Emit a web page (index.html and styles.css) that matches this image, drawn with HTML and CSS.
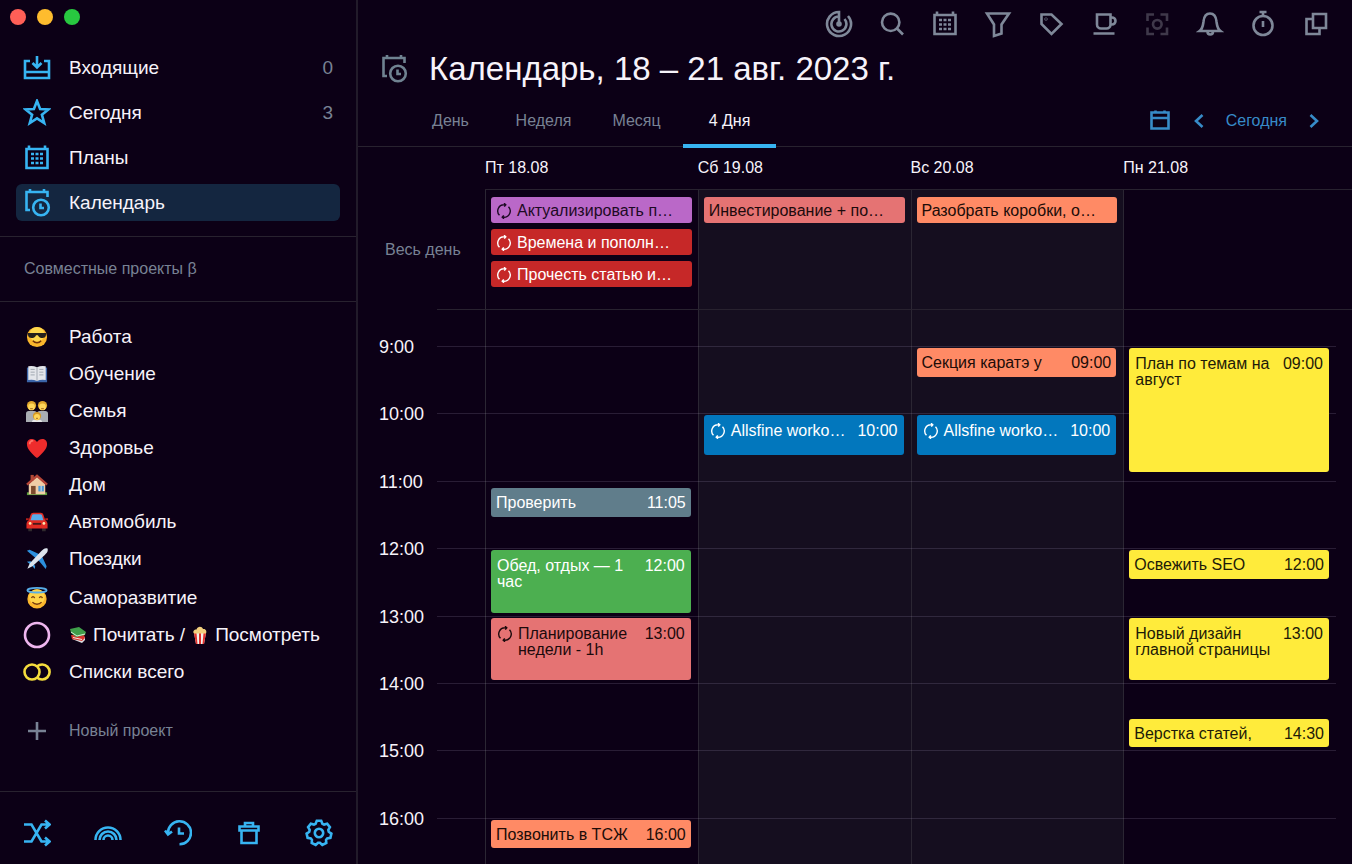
FILE: index.html
```html
<!DOCTYPE html>
<html lang="ru">
<head>
<meta charset="utf-8">
<title>Календарь</title>
<link rel="stylesheet" href="styles.css">
</head>
<body>
<svg class="sprite" aria-hidden="true">
  <symbol id="i-inbox" viewBox="0 0 28 28"><path d="M7 7H2v17h24V7h-5M2 18h24M14 2v11M9.500 9l4.500 4.500L18.500 9"/></symbol>
  <symbol id="i-star" viewBox="0 0 28 28"><path d="M14 2l3.100 8 8.400.4-6.600 5.300 2.300 8.300-7.200-4.700L6.800 24l2.300-8.300L2.500 10.400l8.400-.4z"/></symbol>
  <symbol id="i-plans" viewBox="0 0 28 28"><path d="M3.500 5h21v19h-21zM6 1.500V5M22 1.500V5"/><path class="dots" d="M8 10h3M12.500 10h3M17 10h3M8 14.500h3M12.500 14.500h3M17 14.500h3M8 19h3M12.500 19h3M17 19h3"/></symbol>
  <symbol id="i-cal" viewBox="0 0 28 28"><path d="M7 21H3.500V3h21v5M7 0v3M21 0v3"/><circle cx="18" cy="18.500" r="7.800"/><path d="M17.500 14.500V19H21"/></symbol>
  <symbol id="i-plus" viewBox="0 0 28 28"><path d="M14 5v18M5 14h18"/></symbol>
  <symbol id="i-shuffle" viewBox="0 0 28 28"><path d="M1 5.500h7.500l10 17H26M1 22.500h7.500l10-17H26M22 1.500l4.500 4-4.500 4M22 18.500l4.500 4-4.500 4"/></symbol>
  <symbol id="i-rainbow" viewBox="0 0 28 28"><path d="M1.500 21a12.500 12.500 0 0 1 25 0M5.500 21a8.500 8.500 0 0 1 17 0M9.500 21a4.500 4.500 0 0 1 9 0"/></symbol>
  <symbol id="i-history" viewBox="0 0 28 28"><path d="M4 14.500A11.500 11.500 0 1 1 15.500 25.300M1 11.500l3 4 4-3M15 8.500v6h5"/></symbol>
  <symbol id="i-trash" viewBox="0 0 28 28"><path d="M4.500 7.500h19v4h-19zM6.500 11.500h15V24h-15zM10 7.500V4h8v3.500"/></symbol>
  <symbol id="i-gear" viewBox="-14 -14 28 28"><path d="M-3.400-9.200L-2.200-12.200H2.200L3.400-9.200 5.070-8.390 8.170-9.330 10.910-5.890 9.310-3.080 9.730-1.270 12.380.57 11.400 4.860 8.210 5.360 7.060 6.810 7.280 10.040 3.310 11.950.93 9.760H-.93L-3.310 11.950-7.280 10.040-7.060 6.810-8.210 5.360-11.400 4.860-12.380.57-9.730-1.270-9.310-3.080-10.910-5.890-8.170-9.330-5.070-8.390z"/><circle r="4.200"/></symbol>
  <symbol id="i-radar" viewBox="0 0 28 28"><path d="M14 14V2a12 12 0 1 0 9 4M14 6.500A7.500 7.500 0 1 0 19.500 9"/><circle class="solid" cx="14" cy="14" r="1.500"/></symbol>
  <symbol id="i-search" viewBox="0 0 28 28"><circle cx="12.700" cy="12.300" r="8.700"/><path d="M19 18.500l6 6"/></symbol>
  <symbol id="i-funnel" viewBox="0 0 28 28"><path d="M3 3.500h22l-7.500 11v9l-7.500 2.500V14.500z"/></symbol>
  <symbol id="i-tag" viewBox="0 0 28 28"><path d="M4.500 4.500h10L24.500 14l-10 10-10-10z"/><circle class="solid" cx="9" cy="9" r=".3"/></symbol>
  <symbol id="i-cup" viewBox="0 0 28 28"><path d="M7 4.500h13.500v10a4 4 0 0 1-4 4H11a4 4 0 0 1-4-4zM20.500 7.500H22a3 3 0 0 1 0 7h-1.500M3.500 23.500h21"/></symbol>
  <symbol id="i-scan" viewBox="0 0 28 28"><path d="M4.500 11V4.500H11M17.500 4.500H24V11M24 17.500V24h-6.500M11 24H4.500v-6.500"/><circle cx="14.300" cy="14.300" r="4.300"/></symbol>
  <symbol id="i-bell" viewBox="0 0 28 28"><path d="M3.500 21c3.500-2.500 3.500-6 4-9.500C8 6.500 10 3.500 14 3.500s6 3 6.500 8c.5 3.500.5 7 4 9.500zM11.500 21.500c0 4 5.500 4 5.500 0"/></symbol>
  <symbol id="i-timer" viewBox="0 0 28 28"><circle cx="14" cy="15.500" r="9.500"/><path d="M10.500 2h7M14 2v4M14 11v6"/></symbol>
  <symbol id="i-copy" viewBox="0 0 28 28"><path d="M11 4h13v14H11zM11 9H4.500v15H17.500v-6"/></symbol>
  <symbol id="i-date" viewBox="0 0 28 28"><path d="M5.500 5.500h17v16h-17zM5.500 11h17M9.500 3.500v2M18.500 3.500v2"/></symbol>
  <symbol id="i-left" viewBox="0 0 28 28"><path d="M17.500 8l-6.500 6 6.500 6"/></symbol>
  <symbol id="i-right" viewBox="0 0 28 28"><path d="M10.500 8l6.500 6-6.500 6"/></symbol>
  <symbol id="i-repeat" viewBox="0 0 16 16"><path d="M3.500 12.300A6.200 6.200 0 0 1 8 1.800h1.500M12.500 3.700A6.200 6.200 0 0 1 8 14.200H6.500M8 .2l1.800 1.600L8.300 3.600M8 15.800l-1.800-1.600 1.500-1.800"/></symbol>
</svg>

<div class="app">
  <aside class="sidebar">
    <div class="lights"><i class="light red"></i><i class="light amber"></i><i class="light green"></i></div>
    <nav class="nav">
      <a class="nav-item" href="#inbox"><svg class="icon"><use href="#i-inbox"/></svg><span>Входящие</span><span class="count">0</span></a>
      <a class="nav-item" href="#today"><svg class="icon"><use href="#i-star"/></svg><span>Сегодня</span><span class="count">3</span></a>
      <a class="nav-item" href="#plans"><svg class="icon"><use href="#i-plans"/></svg><span>Планы</span></a>
      <a class="nav-item active" href="#calendar" aria-current="page"><svg class="icon"><use href="#i-cal"/></svg><span>Календарь</span></a>
    </nav>
    <h2 class="shared">Совместные проекты β</h2>
    <nav class="projects">
      <a class="project" href="#work"><svg class="emoji" viewBox="0 0 24 24"><circle cx="12" cy="12" r="11" fill="#fbb62c"/><circle cx="12" cy="9" r="8" fill="#ffd84d"/><path d="M1.500 7.500h21l-1 3.500c-.5 3-7 3-8.500-1h-2c-1.500 4-8 4-8.500 1z" fill="#25201c"/><path d="M7.500 16c2.500 3 6.500 3 9 0" stroke="#70330a" stroke-width="1.600" fill="none"/></svg><span>Работа</span></a>
      <a class="project" href="#study"><svg class="emoji" viewBox="0 0 24 24"><path d="M1 5h22v16H1z" fill="#3b64a8"/><path d="M2.500 3.500q5-1 9.500 1v15q-4.500-2-9.500-1zM21.500 3.500q-5-1-9.500 1v15q4.500-2 9.500-1z" fill="#e3e5ea"/><path d="M12 4.500v15M5 7h4.500M5 10h4.500M5 13h4.500M14.500 7H19M14.500 10H19M14.500 13H19" stroke="#9da3ae" fill="none"/></svg><span>Обучение</span></a>
      <a class="project" href="#family"><svg class="emoji" viewBox="0 0 24 24"><path d="M0 24V15q0-3 3-3h6q3 0 3 3 0-3 3-3h6q3 0 3 3v9z" fill="#a9adb3"/><circle cx="6" cy="6" r="5" fill="#e0a62c"/><circle cx="18" cy="6" r="5" fill="#e0a62c"/><circle cx="6" cy="7.500" r="3.700" fill="#ffd75a"/><circle cx="18" cy="7.500" r="3.700" fill="#ffd75a"/><path d="M6.500 24q0-3 5.500-3t5.500 3z" fill="#e8e8ea"/><circle cx="12" cy="17.500" r="4.500" fill="#d79a25"/><circle cx="12" cy="18.500" r="3.300" fill="#ffd75a"/><path d="M4.500 9.500h3M16.500 9.500h3M11 20h2" stroke="#9a5b17" fill="none"/></svg><span>Семья</span></a>
      <a class="project" href="#health"><svg class="emoji" viewBox="0 0 24 24"><path d="M12 23C7 18.500 1 13.500 1 7.500 1 1 9 .5 12 5.500 15 .5 23 1 23 7.500 23 13.500 17 18.500 12 23z" fill="#ee2c2c"/><path d="M4 8c0-3 2-4 4-4" stroke="#ff7467" stroke-width="2" fill="none"/></svg><span>Здоровье</span></a>
      <a class="project" href="#home"><svg class="emoji" viewBox="0 0 24 24"><path d="M1 20h22v3H1z" fill="#5da03c"/><path d="M3 11l9-8 9 8v11H3z" fill="#f0cda6"/><path d="M5 1h3.500v6H5z" fill="#b34a36"/><path d="M1 11.500L12 2l11 9.500" stroke="#b54537" stroke-width="2.500" fill="none"/><path d="M5.500 13h5v9h-5z" fill="#7b4a2d"/><path d="M13.500 13h6v6h-6z" fill="#4d9bd5"/><path d="M16.500 13v6" stroke="#e9e9e9"/></svg><span>Дом</span></a>
      <a class="project" href="#car"><svg class="emoji" viewBox="0 0 24 24"><path d="M2.500 17h4v5h-4zM17.500 17h4v5h-4z" fill="#302a2e"/><path d="M5 4q.5-2 3-2h8q2.500 0 3 2l2 6q2.500 1 2.500 4v5H.5v-5q0-3 2.500-4z" fill="#e12b23"/><path d="M6.500 5q.5-1.500 2-1.500h7q1.500 0 2 1.500L19 10H5z" fill="#58aceb"/><path d="M0 9h3M21 9h3" stroke="#b51f1b" stroke-width="2"/><circle cx="4.500" cy="13.500" r="1.500" fill="#ffe8b0"/><circle cx="19.500" cy="13.500" r="1.500" fill="#ffe8b0"/><path d="M7.500 14h9" stroke="#47191a" stroke-width="2"/></svg><span>Автомобиль</span></a>
      <a class="project" href="#trips"><svg class="emoji" viewBox="0 0 24 24"><path d="M1 3l3-1 13 6-4 5zM21.500 23l1-3-6-13-5 4z" fill="#2c8fdd"/><path d="M1 15l4-.5 5 5-.5 3.500-3-4z" fill="#3b9be4"/><path d="M23.500.5c-3-1-5 1-7 3L4 17l-2.500 5.500L7 20 20.500 7.500c2-2 4-4 3-7z" fill="#dce3ec"/></svg><span>Поездки</span></a>
      <a class="project spaced" href="#growth"><svg class="emoji" viewBox="0 0 24 24"><circle cx="12" cy="13" r="10.500" fill="#fbb62c"/><circle cx="12" cy="11" r="8.500" fill="#ffd54a"/><ellipse cx="12" cy="3.500" rx="10.500" ry="2.500" fill="none" stroke="#58aee8" stroke-width="2"/><path d="M6 12q1.500-3 3.500 0M14.500 12q1.500-3 3.500 0M7 16.500c2.500 3 7.500 3 10 0" stroke="#7a3b0c" stroke-width="1.500" fill="none"/></svg><span>Саморазвитие</span></a>
      <a class="project" href="#read"><svg class="emoji ring" viewBox="0 0 28 28"><circle cx="14" cy="14" r="12"/></svg><span class="inline-label"><svg class="mini" viewBox="0 0 18 18"><path d="M3 13l10 4 3-3v-3L6 9z" fill="#d9dbe0"/><path d="M2 9l1 4 10 2 3-3-1-3z" fill="#d8352f"/><path d="M4 11.500l9 2" stroke="#f3e5d8"/><path d="M1 3l9-2 7 5-1 3-9 2-5-4z" fill="#3f9e4a"/><path d="M2 6l6 4 8-2" stroke="#d9eed8" fill="none"/></svg>Почитать / <svg class="mini" viewBox="0 0 18 18"><path d="M3 7h12l-2 11H5z" fill="#f3f0ec"/><path d="M3 7h2.500l1 11H5zM8 7h2v11H8zM12.500 7H15l-2 11h-1.500z" fill="#e2302c"/><path d="M3 7.500C1 5 4 3 5.500 3.500 6.500 0 11 0 12 3c3-.5 4 2.500 3 4.500z" fill="#f3cf7e"/></svg> Посмотреть</span></a>
      <a class="project" href="#lists"><svg class="icon rings" viewBox="0 0 28 28"><circle cx="9" cy="14" r="7.500"/><path d="M14 8.500a7.500 7.500 0 1 1 0 11"/></svg><span>Списки всего</span></a>
    </nav>
    <button class="new-project" type="button"><svg class="icon"><use href="#i-plus"/></svg><span>Новый проект</span></button>
    <footer class="side-footer">
      <button type="button" aria-label="Перемешать"><svg class="icon"><use href="#i-shuffle"/></svg></button>
      <button type="button" aria-label="Оформление"><svg class="icon"><use href="#i-rainbow"/></svg></button>
      <button type="button" aria-label="История"><svg class="icon"><use href="#i-history"/></svg></button>
      <button type="button" aria-label="Корзина"><svg class="icon"><use href="#i-trash"/></svg></button>
      <button type="button" aria-label="Настройки"><svg class="icon"><use href="#i-gear"/></svg></button>
    </footer>
  </aside>

  <main class="main">
    <div class="toolbar">
      <button type="button" aria-label="Фокус"><svg class="icon"><use href="#i-radar"/></svg></button>
      <button type="button" aria-label="Поиск"><svg class="icon"><use href="#i-search"/></svg></button>
      <button type="button" aria-label="Планы"><svg class="icon"><use href="#i-plans"/></svg></button>
      <button type="button" aria-label="Фильтр"><svg class="icon"><use href="#i-funnel"/></svg></button>
      <button type="button" aria-label="Метки"><svg class="icon"><use href="#i-tag"/></svg></button>
      <button type="button" aria-label="Перерыв"><svg class="icon"><use href="#i-cup"/></svg></button>
      <button class="dim" type="button" aria-label="Снимок"><svg class="icon"><use href="#i-scan"/></svg></button>
      <button type="button" aria-label="Уведомления"><svg class="icon"><use href="#i-bell"/></svg></button>
      <button type="button" aria-label="Таймер"><svg class="icon"><use href="#i-timer"/></svg></button>
      <button type="button" aria-label="Окна"><svg class="icon"><use href="#i-copy"/></svg></button>
    </div>
    <header class="title-row">
      <svg class="icon"><use href="#i-cal"/></svg>
      <h1>Календарь, 18 – 21 авг. 2023 г.</h1>
    </header>
    <div class="view-bar">
      <div class="tabs">
        <button type="button">День</button>
        <button type="button">Неделя</button>
        <button type="button">Месяц</button>
        <button class="active" type="button">4 Дня</button>
      </div>
      <div class="pager">
        <button type="button" aria-label="Выбрать дату"><svg class="icon"><use href="#i-date"/></svg></button>
        <button type="button" aria-label="Назад"><svg class="icon"><use href="#i-left"/></svg></button>
        <button class="today" type="button">Сегодня</button>
        <button type="button" aria-label="Вперёд"><svg class="icon"><use href="#i-right"/></svg></button>
      </div>
    </div>

    <section class="calendar">
      <div class="columns day-names">
        <span></span><span>Пт 18.08</span><span>Сб 19.08</span><span>Вс 20.08</span><span>Пн 21.08</span>
      </div>
      <div class="columns all-day">
        <span class="all-day-label">Весь день</span>
        <div class="day">
          <article class="chip purple"><svg class="repeat"><use href="#i-repeat"/></svg><span>Актуализировать п…</span></article>
          <article class="chip red"><svg class="repeat"><use href="#i-repeat"/></svg><span>Времена и пополн…</span></article>
          <article class="chip red"><svg class="repeat"><use href="#i-repeat"/></svg><span>Прочесть статью и…</span></article>
        </div>
        <div class="day weekend"><article class="chip coral"><span>Инвестирование + по…</span></article></div>
        <div class="day weekend"><article class="chip orange"><span>Разобрать коробки, о…</span></article></div>
        <div class="day"></div>
      </div>
      <div class="columns spacer"><span></span><div class="day"></div><div class="day weekend"></div><div class="day weekend"></div><div class="day"></div></div>
      <div class="timeline">
        <div class="columns backdrop">
          <span></span><div class="day"></div><div class="day weekend"></div><div class="day weekend"></div><div class="day"></div>
        </div>
        <div class="hours">
          <div class="hour"><span>9:00</span><i></i></div>
          <div class="hour"><span>10:00</span><i></i></div>
          <div class="hour"><span>11:00</span><i></i></div>
          <div class="hour"><span>12:00</span><i></i></div>
          <div class="hour"><span>13:00</span><i></i></div>
          <div class="hour"><span>14:00</span><i></i></div>
          <div class="hour"><span>15:00</span><i></i></div>
          <div class="hour"><span>16:00</span><i></i></div>
        </div>
        <div class="columns schedule">
          <span></span>
          <div class="slots">
            <article class="event slate" style="grid-row: 26 / span 6"><span class="name">Проверить</span><time>11:05</time></article>
            <article class="event tall green" style="grid-row: 37 / span 12"><span class="name">Обед, отдых — 1 час</span><time>12:00</time></article>
            <article class="event tall coral" style="grid-row: 49 / span 12"><svg class="repeat"><use href="#i-repeat"/></svg><span class="name">Планирование недели - 1h</span><time>13:00</time></article>
            <article class="event orange" style="grid-row: 85 / span 6"><span class="name">Позвонить в ТСЖ</span><time>16:00</time></article>
          </div>
          <div class="slots">
            <article class="event tall single blue" style="grid-row: 13 / span 8"><svg class="repeat"><use href="#i-repeat"/></svg><span class="name">Allsfine worko…</span><time>10:00</time></article>
          </div>
          <div class="slots">
            <article class="event orange" style="grid-row: 1 / span 6"><span class="name">Секция каратэ у</span><time>09:00</time></article>
            <article class="event tall single blue" style="grid-row: 13 / span 8"><svg class="repeat"><use href="#i-repeat"/></svg><span class="name">Allsfine worko…</span><time>10:00</time></article>
          </div>
          <div class="slots">
            <article class="event tall yellow" style="grid-row: 1 / span 23"><span class="name">План по темам на август</span><time>09:00</time></article>
            <article class="event yellow" style="grid-row: 37 / span 6"><span class="name">Освежить SEO</span><time>12:00</time></article>
            <article class="event tall yellow" style="grid-row: 49 / span 12"><span class="name">Новый дизайн главной страницы</span><time>13:00</time></article>
            <article class="event yellow" style="grid-row: 67 / span 6"><span class="name">Верстка статей,</span><time>14:30</time></article>
          </div>
        </div>
      </div>
    </section>
  </main>
</div>
</body>
</html>
```
FILE: styles.css
```css
:root {
  --bg: #0c0016;
  --line: #28222f;
  --muted: #788294;
  --accent: #37b4f2;
  --white: #f7f3fa;
}

* { box-sizing: border-box; }

body {
  margin: 0;
  background: var(--bg);
  color: var(--white);
  font-family: "Liberation Sans", Arial, sans-serif;
  font-size: 16px;
}

button {
  padding: 0;
  border: 0;
  background: none;
  color: inherit;
  font: inherit;
  cursor: pointer;
}

a { color: inherit; text-decoration: none; }
h1, h2 { margin: 0; font-weight: 400; }
svg { display: block; }
.sprite { position: absolute; width: 0; height: 0; }

.icon {
  width: 28px;
  height: 28px;
  flex: none;
  fill: none;
  stroke: currentColor;
  stroke-width: 2.6;
}
.solid { fill: currentColor; }

.app {
  display: grid;
  grid-template-columns: 358px minmax(0, 1fr);
  height: 100vh;
  overflow: hidden;
}

/* Sidebar */
.sidebar {
  display: flex;
  flex-direction: column;
  border-right: 2px solid #221b2a;
}
.lights {
  display: flex;
  gap: 11px;
  padding: 9px 10px 24px;
}
.light { width: 16px; height: 16px; border-radius: 50%; }
.red.light { background: #ff5f57; }
.amber.light { background: #febc2e; }
.green.light { background: #28c840; }

.nav {
  display: flex;
  flex-direction: column;
  gap: 8px;
  padding: 0 16px 15px;
  border-bottom: 1px solid var(--line);
}
.nav-item, .project, .new-project {
  display: flex;
  align-items: center;
  gap: 18px;
  height: 37px;
  padding: 0 7px;
  font-size: 19px;
  white-space: nowrap;
}
.nav-item { border-radius: 6px; }
.nav-item .icon, .side-footer { color: var(--accent); }
.nav-item.active { background: #142640; }
.count { margin-left: auto; color: var(--muted); }

.shared {
  padding: 0 24px;
  border-bottom: 1px solid var(--line);
  color: var(--muted);
  font-size: 16px;
  line-height: 64px;
}
.projects { padding: 16px 16px 0; }
.spaced { margin-top: 2px; }
.emoji { width: 22px; height: 22px; margin: 0 3px; flex: none; }
.emoji.ring {
  width: 28px;
  height: 28px;
  margin: 0;
  fill: none;
  stroke: #efb6ef;
  stroke-width: 2.6;
}
.icon.rings { color: #f5dc3d; }
.inline-label { display: flex; align-items: center; gap: 6px; }
.mini { width: 18px; height: 18px; }
.new-project {
  margin: 22px 16px 0;
  color: var(--muted);
  font-size: 16px;
}
.side-footer {
  display: flex;
  justify-content: space-between;
  margin-top: auto;
  padding: 27px 23px 17px;
  border-top: 1px solid var(--line);
}

/* Header */
.main { display: flex; flex-direction: column; min-height: 0; }
.toolbar {
  display: flex;
  justify-content: flex-end;
  align-items: center;
  gap: 25px;
  height: 48px;
  padding-right: 22px;
  color: #7f8899;
}
.dim { color: #3f384a; }
.title-row {
  display: flex;
  align-items: center;
  gap: 21px;
  height: 42px;
  padding-left: 22px;
}
.title-row .icon { color: #6f8291; }
h1 { font-size: 33px; line-height: 40px; }

.view-bar {
  display: flex;
  justify-content: space-between;
  height: 57px;
  padding: 0 24px 0 46px;
  border-bottom: 1px solid var(--line);
}
.tabs { display: flex; color: var(--muted); }
.tabs button { position: relative; width: 93px; padding-top: 6px; }
.tabs .active { color: var(--white); }
.tabs .active::after {
  content: "";
  position: absolute;
  left: 0;
  right: 0;
  bottom: -2px;
  height: 4px;
  background: var(--accent);
}
.pager {
  display: flex;
  align-items: center;
  gap: 11px;
  padding-top: 6px;
  color: #378bc8;
}
.today { padding: 0 2px; }

/* Calendar */
.calendar { flex: 1; min-height: 0; overflow: hidden; }
.columns {
  display: grid;
  grid-template-columns: 127px repeat(4, minmax(0, 1fr));
  padding-right: 16px;
}
.day-names { line-height: 42px; }
.day { border-left: 1px solid #2b2633; }
.weekend { background: #150e1f; }

.all-day { position: relative; height: 120px; }
.all-day::before, .all-day::after {
  content: "";
  position: absolute;
  right: 0;
  height: 1px;
  background: var(--line);
}
.all-day::before { left: 127px; top: 0; }
.all-day::after { left: 79px; bottom: -1px; }
.all-day-label { align-self: center; padding: 2px 0 0 27px; color: var(--muted); }
.all-day .day {
  display: flex;
  flex-direction: column;
  gap: 6px;
  padding: 8px 6px 0 5px;
}
.chip {
  display: flex;
  align-items: center;
  gap: 5px;
  height: 26px;
  padding: 1px 5px 0;
  border-radius: 3px;
  white-space: nowrap;
}
.repeat {
  width: 16px;
  height: 16px;
  flex: none;
  fill: none;
  stroke: currentColor;
  stroke-width: 1.4;
}

.spacer { height: 37px; }
.timeline { display: grid; height: 539px; }
.backdrop, .hours, .schedule { grid-area: 1 / 1; min-height: 0; }
.hours {
  display: grid;
  grid-template-rows: repeat(8, 1fr);
  padding: 0 16px 0 21px;
}
.hour { display: flex; font-size: 18px; line-height: 20px; }
.hour span { width: 58px; margin-top: -9px; }
.hour i { flex: 1; border-top: 1px solid rgba(190, 180, 215, 0.16); }
.slots {
  display: grid;
  grid-template-rows: repeat(96, minmax(0, 1fr));
  padding: 0 7px 0 6px;
}
.event {
  display: flex;
  align-items: flex-start;
  gap: 5px;
  min-height: 0;
  margin: 2px 0 3px;
  padding: 7px 5px 0;
  border-radius: 3px;
  line-height: 16px;
}
.event .name { flex: 1; min-width: 0; }
.event.tall { padding: 8px 6px 0; }
.single .name { white-space: nowrap; }

.purple { background: #ba68c8; color: #1d0a24; }
.red.chip { background: #c62828; color: #fff; }
.coral { background: #e57373; color: #1c0a0c; }
.orange { background: #ff8a65; color: #200c08; }
.slate { background: #607d8b; color: #fff; }
.green.event { background: #4caf50; color: #fff; }
.blue { background: #0277bd; color: #fff; }
.yellow { background: #ffeb3b; color: #1d1a08; }
```
